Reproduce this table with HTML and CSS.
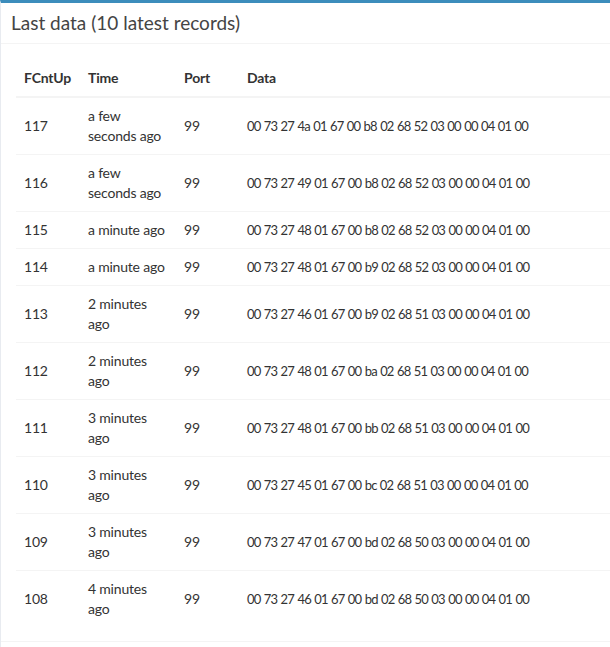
FILE: index.html
```html
<!DOCTYPE html>
<html>
<head>
<meta charset="utf-8">
<link rel="stylesheet" href="styles.css">
</head>
<body>
<div class="box">
  <div class="box-header">
    <h3 class="box-title">Last data (10 latest records)</h3>
  </div>
  <div class="box-body">
    <table class="table">
      <colgroup>
        <col class="c-cnt"><col class="c-time"><col class="c-port"><col class="c-data">
      </colgroup>
      <thead>
        <tr><th>FCntUp</th><th>Time</th><th>Port</th><th>Data</th></tr>
      </thead>
      <tbody>
        <tr><td>117</td><td>a few seconds ago</td><td>99</td><td class="hex">00 73 27 4a 01 67 00 b8 02 68 52 03 00 00 04 01 00</td></tr>
        <tr><td>116</td><td>a few seconds ago</td><td>99</td><td class="hex">00 73 27 49 01 67 00 b8 02 68 52 03 00 00 04 01 00</td></tr>
        <tr><td>115</td><td>a minute ago</td><td>99</td><td class="hex">00 73 27 48 01 67 00 b8 02 68 52 03 00 00 04 01 00</td></tr>
        <tr><td>114</td><td>a minute ago</td><td>99</td><td class="hex">00 73 27 48 01 67 00 b9 02 68 52 03 00 00 04 01 00</td></tr>
        <tr><td>113</td><td>2 minutes ago</td><td>99</td><td class="hex">00 73 27 46 01 67 00 b9 02 68 51 03 00 00 04 01 00</td></tr>
        <tr><td>112</td><td>2 minutes ago</td><td>99</td><td class="hex">00 73 27 48 01 67 00 ba 02 68 51 03 00 00 04 01 00</td></tr>
        <tr><td>111</td><td>3 minutes ago</td><td>99</td><td class="hex">00 73 27 48 01 67 00 bb 02 68 51 03 00 00 04 01 00</td></tr>
        <tr><td>110</td><td>3 minutes ago</td><td>99</td><td class="hex">00 73 27 45 01 67 00 bc 02 68 51 03 00 00 04 01 00</td></tr>
        <tr><td>109</td><td>3 minutes ago</td><td>99</td><td class="hex">00 73 27 47 01 67 00 bd 02 68 50 03 00 00 04 01 00</td></tr>
        <tr><td>108</td><td>4 minutes ago</td><td>99</td><td class="hex">00 73 27 46 01 67 00 bd 02 68 50 03 00 00 04 01 00</td></tr>
      </tbody>
    </table>
  </div>
  <div class="box-footer"></div>
</div>
</body>
</html>
```
FILE: styles.css
```css
html, body {
  margin: 0;
  padding: 0;
  background: #fff;
}
body {
  font-family: "Source Sans Pro", Lato, "Liberation Sans", sans-serif;
  font-size: 14px;
  line-height: 20px;
  color: #333;
  letter-spacing: -0.2px;
}
.box {
  border-top: 3px solid #3c8dbc;
  border-left: 1px solid #e8ebf0;
  background: #fff;
}
.box-header {
  padding: 10px;
  border-bottom: 1px solid #f4f4f4;
}
.box-title {
  margin: 0;
  font-size: 19px;
  line-height: 20px;
  font-weight: 400;
  color: #444;
  letter-spacing: 0;
}
.box-body {
  padding: 16px 0 14px 15px;
}
.table {
  width: 100%;
  border-collapse: collapse;
  table-layout: fixed;
}
.c-cnt { width: 64px; }
.c-time { width: 96px; }
.c-port { width: 63px; }
.table th {
  text-align: left;
  font-weight: 700;
  padding: 8px;
  border-bottom: 2px solid #f4f4f4;
  vertical-align: bottom;
}
.table td {
  padding: 8px;
  vertical-align: middle;
  border-top: 1px solid #f4f4f4;
}
.table tbody tr:first-child td {
  border-top: 0;
}
.table td.hex {
  font-size: 13px;
  letter-spacing: -0.8px;
  word-spacing: 0.8px;
  white-space: nowrap;
}
.box-footer {
  border-top: 1px solid #f4f4f4;
  height: 20px;
}
```
